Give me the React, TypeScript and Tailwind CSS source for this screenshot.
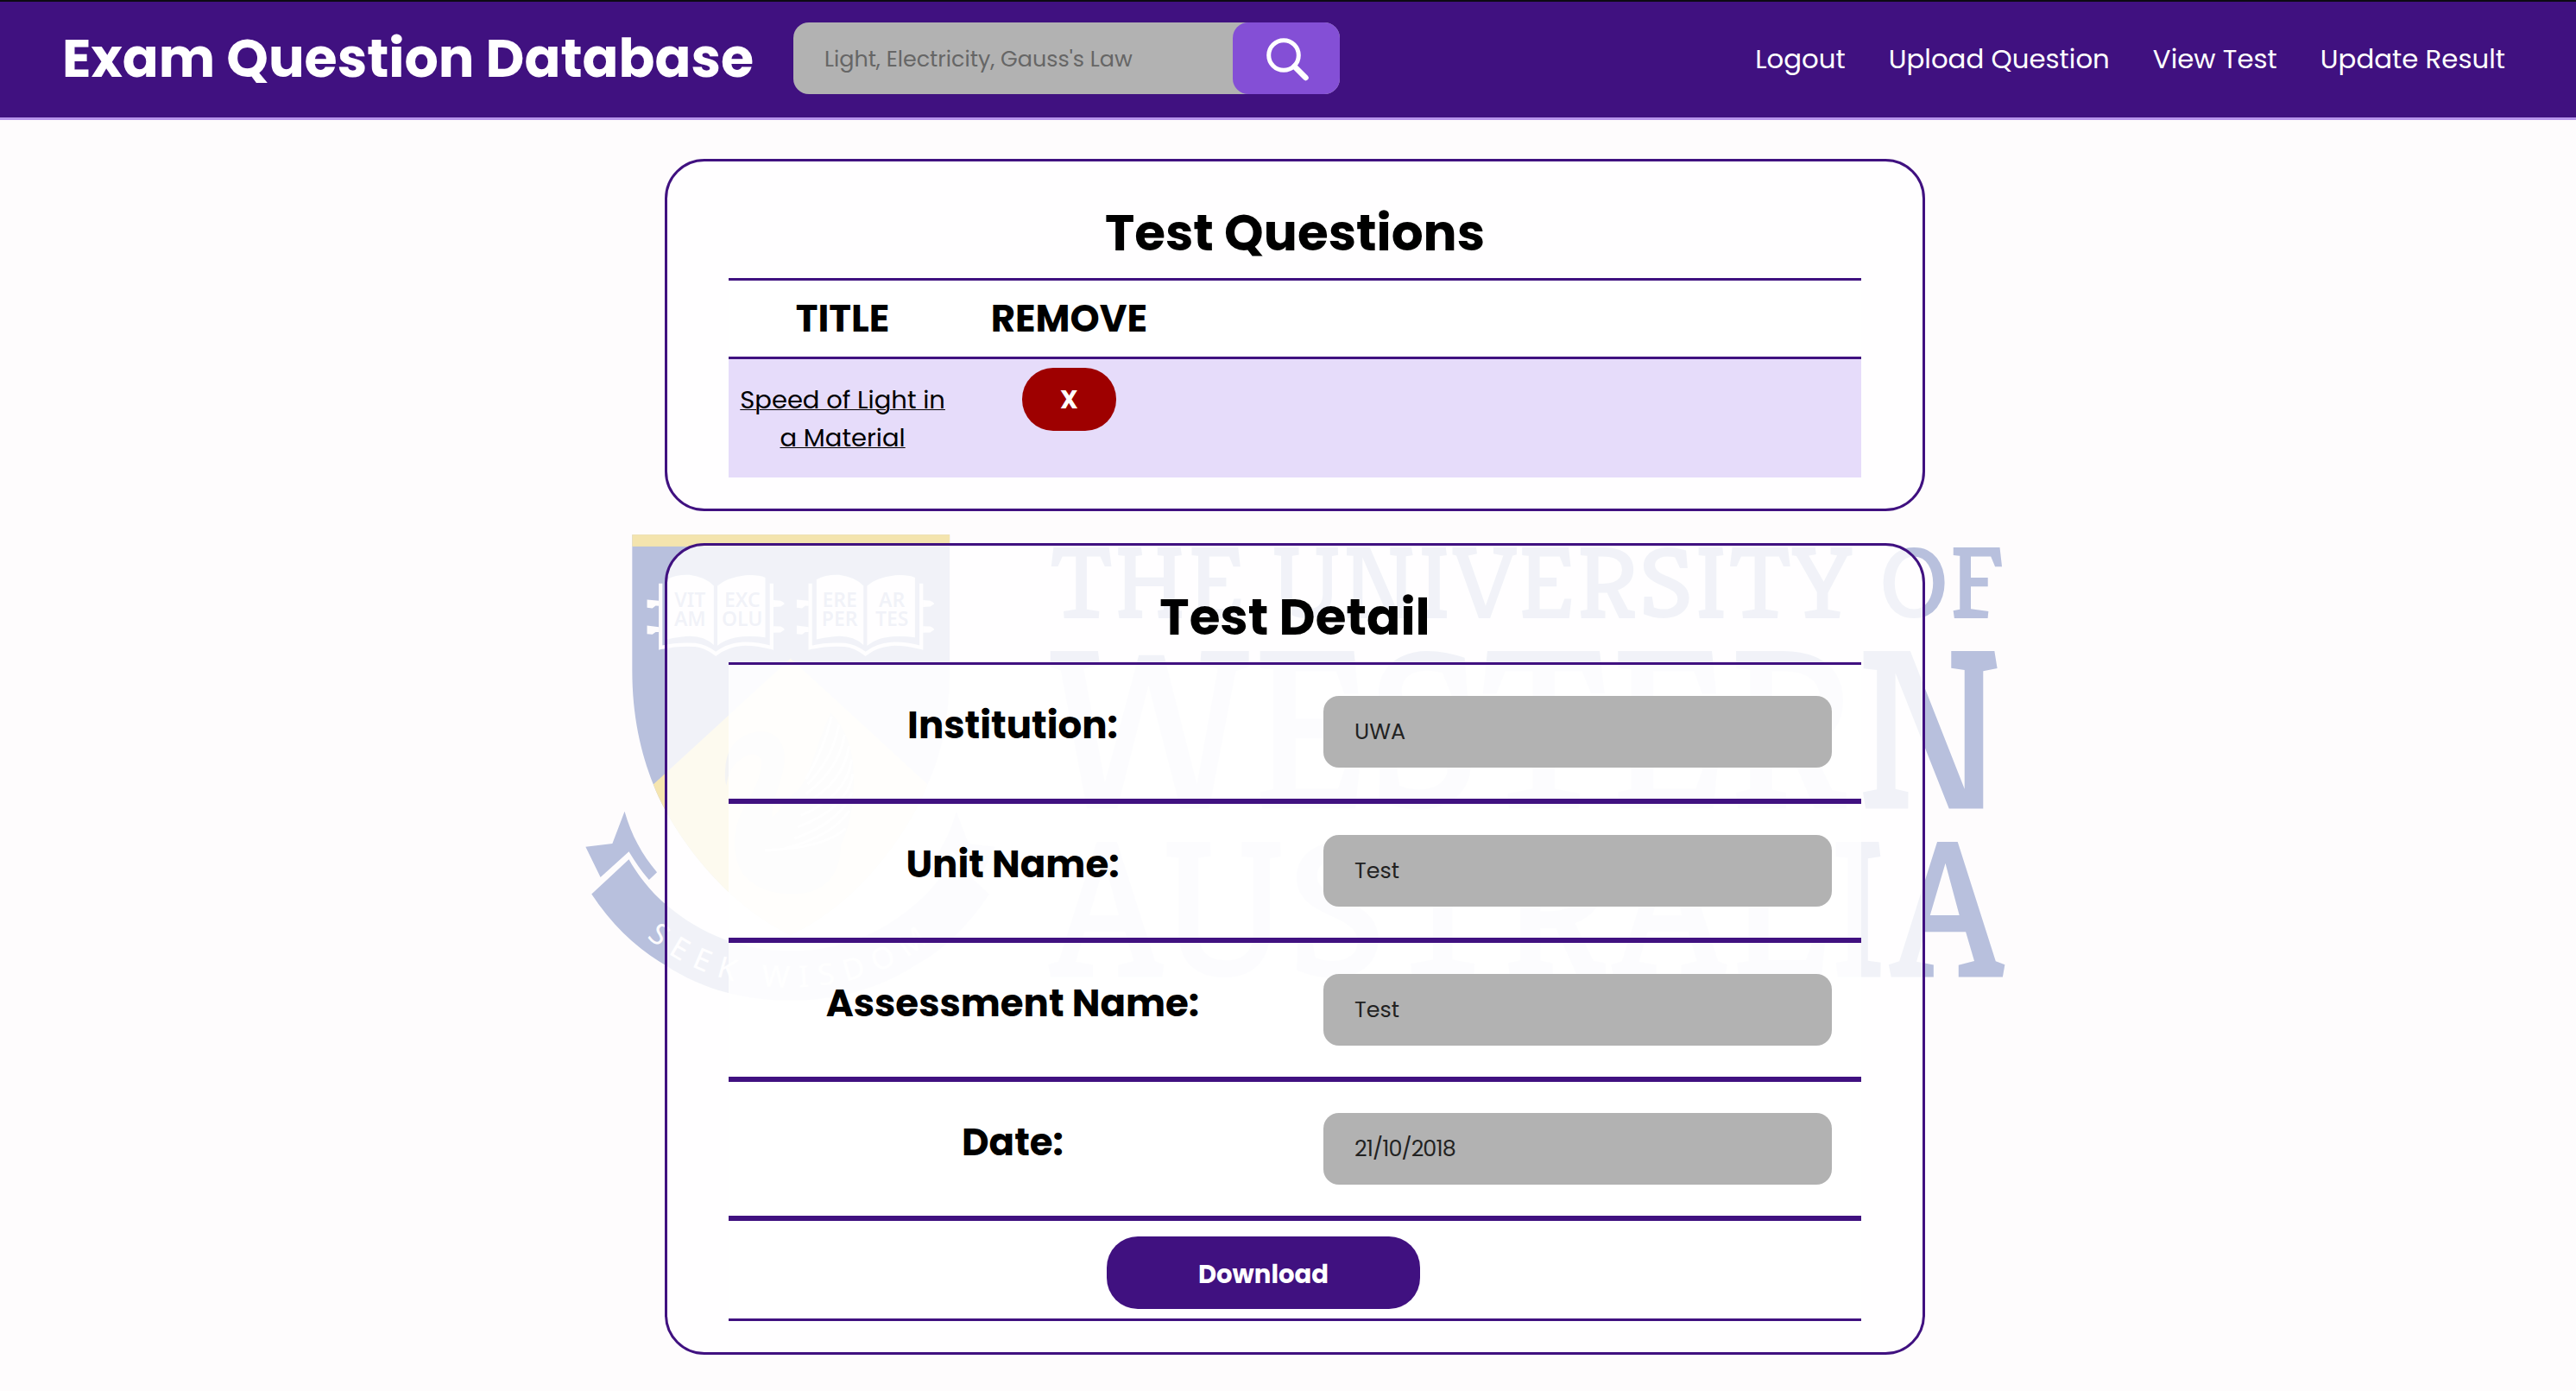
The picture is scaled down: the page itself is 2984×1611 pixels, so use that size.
import React from "react";

const NAV = ["Logout", "Upload Question", "View Test", "Update Result"];

const FIELDS = [
  { label: "Institution:", value: "UWA", input: "" },
  { label: "Unit Name:", value: "Test", input: "" },
  { label: "Assessment Name:", value: "Test", input: "" },
  { label: "Date:", value: "21/10/2018", input: "tracking-[-0.035em]" },
];

function Book({ x, words }: { x: number; words: string[][] }) {
  return (
    <g transform={`translate(${x} 0)`}>
      <g fill="#fefcfd">
        {/* pages */}
        <path d="M24 186 Q50 171 92 172 Q140 178 166 205 V384 Q130 350 70 359 Q45 361 24 367 Z" />
        <path d="M177 205 Q205 180 262 173 Q300 171 322 180 V361 Q270 355 230 362 Q200 368 177 386 Z" />
        {/* clasps */}
        <path d="M0 250 L-36 247 V271 L-20 273 L-10 265 L0 266 Z M0 330 L-36 325 V351 L-20 352 L-10 345 L0 345 Z" />
        <path d="M346 248 L368 250 Q380 256 380 260 L368 268 L346 269 Z M346 327 L368 328 Q380 334 380 338 L368 346 L346 347 Z" />
      </g>
      {/* cover */}
      <path
        d="M5 198 V392 Q60 380 110 384 Q140 387 172 411 Q205 385 250 381 Q290 379 341 392 V198"
        fill="none"
        stroke="#fefcfd"
        strokeWidth="11"
      />
      <g fill="#b8c0dd" fontFamily="Noto Sans, sans-serif" fontWeight="600" fontSize="60" textAnchor="middle">
        <text x="94" y="268">{words[0][0]}</text>
        <text x="94" y="327">{words[0][1]}</text>
        <text x="252" y="268">{words[1][0]}</text>
        <text x="252" y="327">{words[1][1]}</text>
      </g>
    </g>
  );
}

function Watermark() {
  return (
    <svg
      className="absolute left-[660px] top-[600px] h-[600px] w-[1700px]"
      viewBox="660 600 1700 600"
      aria-hidden="true"
    >
      <g transform="translate(660 600) scale(0.3827)">
        {/* shield */}
        <path
          d="M189 50 H1150 V460 C1150 600 1125 720 1083 806 C1060 860 1045 890 1020 930 C920 1090 800 1200 668 1262 C536 1200 410 1080 316 930 C291 890 270 850 253 806 C215 710 189 600 189 460 Z"
          fill="#b8c0dd"
        />
        <rect x="189" y="50" width="961" height="36" fill="#f4e4ae" />
        <path
          d="M668 425 L1083 806 C1060 860 1045 890 1020 930 C920 1090 800 1200 668 1262 C536 1200 410 1080 316 930 C291 890 270 850 253 806 Z"
          fill="#f5e5b0"
        />
        {/* swan: neck and head, body, wing */}
        <path
          d="M472 745 C480 680 530 645 585 646 C640 652 656 700 648 750 C638 810 608 860 612 905 C630 900 650 850 690 825 C730 780 740 700 790 590 C830 630 860 700 858 770 C862 850 850 930 820 990 C820 1060 790 1110 730 1130 C650 1150 560 1130 520 1070 C490 1010 495 950 520 890 C550 840 585 780 580 730 C560 700 530 720 510 735 C495 745 480 770 474 810 C468 790 470 765 472 745 Z"
          fill="#c2c3c6"
        />
        <path
          d="M792 600 Q770 700 715 790 M815 625 Q795 730 720 805 M832 655 Q815 760 715 835 M845 690 Q830 800 710 865 M853 730 Q840 840 700 900 M857 775 Q840 880 690 935 M855 830 Q820 920 680 970 M846 885 Q800 960 650 1000 M835 940 Q770 1000 590 1005"
          stroke="#fefcfd"
          strokeWidth="8"
          fill="none"
        />
        <Book x={270} words={[["VIT", "AM"], ["EXC", "OLU"]]} />
        <Book x={723} words={[["ERE", "PER"], ["AR", "TES"]]} />
        {/* ribbon */}
        <g fill="#b8c0dd">
          <path d="M166 888 L129 985 L48 995 L93 1087 L179 1009 C198 1040 218 1070 240 1095 L264 1072 C220 1020 186 960 166 888 Z" />
          <path d="M1170 888 L1207 985 L1288 995 L1243 1087 L1157 1009 C1138 1040 1118 1070 1096 1095 L1072 1072 C1116 1020 1150 960 1170 888 Z" />
          <path d="M66 1138 L179 1033 C205 1080 245 1130 288 1167 C400 1265 530 1310 668 1310 C806 1310 936 1265 1048 1167 C1091 1130 1131 1080 1157 1033 L1270 1138 C1210 1230 1130 1310 1048 1352 C930 1430 800 1460 668 1460 C536 1460 406 1430 288 1352 C206 1305 126 1230 66 1138 Z" />
        </g>
        <path id="motto" d="M232 1268 C350 1370 500 1420 668 1420 C836 1420 986 1370 1104 1268" fill="none" />
        <text fill="#fefcfd" fontFamily="Noto Sans, sans-serif" fontSize="90" textLength="920" lengthAdjust="spacing">
          <textPath href="#motto" textLength="920" lengthAdjust="spacing">
            SEEK WISDOM
          </textPath>
        </text>
      </g>
      <g fill="#b8c0dd" fontFamily="Kreon, DejaVu Serif, serif">
        <text x="1216" y="715.5" fontSize="119" textLength="1105" lengthAdjust="spacingAndGlyphs">
          THE UNIVERSITY OF
        </text>
        <text x="1213" y="936.5" fontSize="264" textLength="1110" lengthAdjust="spacingAndGlyphs">
          WESTERN
        </text>
        <text x="1215" y="1131" fontSize="226" textLength="1108" lengthAdjust="spacingAndGlyphs">
          AUSTRALIA
        </text>
      </g>
    </svg>
  );
}

function Card({ title, children }: { title: string; children: React.ReactNode }) {
  return (
    <section className="w-[1460px] rounded-[46px] border-3 border-[#401180] bg-white/80 px-[71px] pb-9">
      <h2 className="flex h-[135px] items-center justify-center pt-[31px] text-[58px] leading-none font-bold">
        {title}
      </h2>
      {children}
    </section>
  );
}

export default function App() {
  return (
    <div className="relative min-h-[1611px] bg-[#fefcfd] font-[Poppins,Inter,sans-serif] text-black">
      <Watermark />
      <header className="relative flex h-[139px] items-center border-t-2 border-b-3 border-t-[#0d0b12] border-b-[#b794ec] bg-[#401180] pr-[82px] pb-[3px] pl-[72px] text-white">
        <h1 className="w-[847px] text-[61.8px] leading-none font-bold whitespace-nowrap">Exam Question Database</h1>
        <form className="flex h-[83px] w-[633px] rounded-[18px] bg-[#b2b2b2]">
          <input
            className="min-w-0 flex-1 bg-transparent pt-px pl-[36px] text-[25.4px] text-[#222] outline-none placeholder:text-[#666]"
            placeholder="Light, Electricity, Gauss's Law"
          />
          <button type="button" aria-label="Search" className="h-[83px] w-[124px] rounded-[18px] bg-[#844fd6]">
            <svg className="h-[83px] w-[124px]" viewBox="0 0 124 83" fill="none" stroke="#fff">
              <circle cx="59" cy="38" r="17.3" strokeWidth="5" />
              <path d="M71.5 51 L84.5 64" strokeWidth="6.5" strokeLinecap="round" />
            </svg>
          </button>
        </form>
        <nav className="ml-auto flex gap-[50px] pt-[3px] text-[30.8px] leading-none whitespace-nowrap">
          {NAV.map((label) => (
            <a key={label}>{label}</a>
          ))}
        </nav>
      </header>

      <main className="relative flex flex-col gap-[37px] pt-[45px] pl-[770px]">
        <Card title="Test Questions">
          <div className="border-t-3 border-[#401180] bg-white/80">
            <div className="grid h-[91px] grid-cols-5 items-center border-b-3 border-[#401180] pl-px text-center text-[43.5px] leading-none font-bold">
              <span>TITLE</span>
              <span>REMOVE</span>
            </div>
            <div className="grid h-[137px] grid-cols-5 bg-[#e6dcfa] pl-px text-center">
              <a className="pt-[25px] text-[29px] leading-[44px] underline decoration-[1px]">
                Speed of Light in
                <br />a Material
              </a>
              <button
                type="button"
                className="mt-[10px] h-[73px] w-[109px] justify-self-center rounded-[36px] bg-[#9e0000] pt-px text-[29px] leading-none font-bold text-white"
              >
                X
              </button>
            </div>
          </div>
        </Card>

        <Card title="Test Detail">
          <div className="border-y-3 border-[#401180] bg-white/80">
            {FIELDS.map((f) => (
              <div key={f.label} className="grid h-[161px] grid-cols-2 border-b-6 border-[#401180]">
                <label className="flex h-[139px] items-center justify-center pl-[2px] text-[43.5px] leading-none font-bold">
                  {f.label}
                </label>
                <input
                  className={`mt-9 mr-px h-[83px] w-[589px] justify-self-center rounded-[18px] bg-[#b2b2b2] px-[36px] text-[25.4px] text-[#222] outline-none ${f.input}`}
                  defaultValue={f.value}
                />
              </div>
            ))}
            <div className="h-[113px] pt-[18px] pl-[438px]">
              <button
                type="button"
                className="block h-[84px] w-[363px] rounded-[36px] bg-[#401180] pt-[4px] text-[29.1px] leading-none font-bold text-white"
              >
                Download
              </button>
            </div>
          </div>
        </Card>
      </main>
    </div>
  );
}
